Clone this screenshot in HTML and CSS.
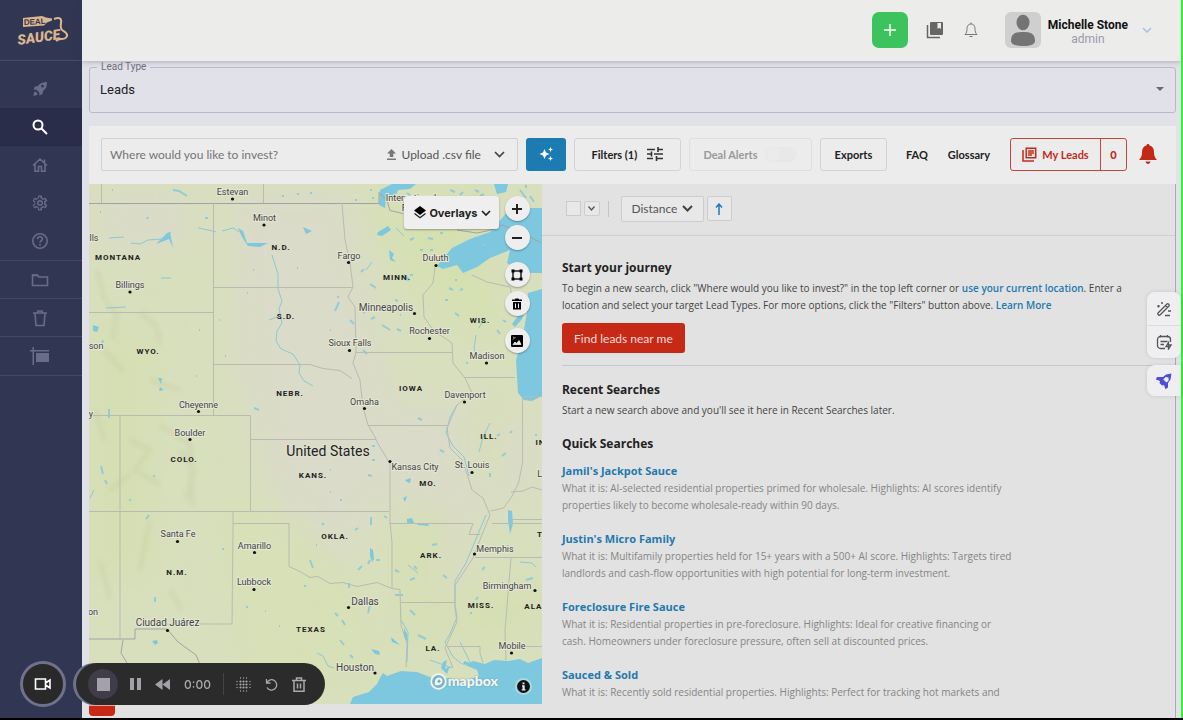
FILE: index.html
```html
<!DOCTYPE html>
<html lang="en">
<head>
  <meta charset="UTF-8">
  <meta name="viewport" content="width=device-width, initial-scale=1.0">
  <title>Deal Sauce - Leads</title>
  <link rel="stylesheet" href="styles.css">
</head>
<body>
  <div class="app">
    <nav class="sidebar">
      <a class="logo" href="#" aria-label="Deal Sauce">
        <svg width="54" height="34" viewBox="0 0 54 34">
          <path d="M7 5l19-2 4 1.500 6 1v2l-5 2-3 3L7 14z" fill="#dcb68f"/>
          <path d="M38 6c5-2 8-1 7 4-1 5 0 7 4 9 4 3 2 7-4 7-2 0-4 1-5 2" fill="none" stroke="#dcb68f" stroke-width="2"/>
          <text class="logo-deal" x="8" y="12" transform="rotate(-3 8 12)">DEAL</text>
          <text class="logo-sauce" x="2" y="32" transform="rotate(-8 2 32)">SAUCE</text>
        </svg>
      </a>
      <a class="nav-item" href="#" aria-label="Launch">
        <svg width="16" height="16" viewBox="0 0 16 16" fill="currentColor"><path d="M15 1c-4 0-7 1-9 4L3 5.500 1.500 8.500l3 .3 2.700 2.700.3 3 3-1.500.5-3C14 8 15 5 15 1zm-4.500 5.600a1.400 1.400 0 1 1 0-2.800 1.400 1.400 0 0 1 0 2.800zM3.500 10.500c-1.500.5-2 2-2 4.200 2.200 0 3.700-.5 4.200-2z"/></svg>
      </a>
      <a class="nav-item active" href="#" aria-label="Search">
        <svg width="16" height="16" viewBox="0 0 16 16" fill="none" stroke="currentColor" stroke-width="2"><circle cx="6" cy="6" r="4.500"/><path d="M9.500 9.500l5.500 5.500"/></svg>
      </a>
      <a class="nav-item" href="#" aria-label="Home">
        <svg width="16" height="16" viewBox="0 0 16 16" fill="none" stroke="currentColor" stroke-width="1.600"><path d="M1 8.500L8 2l7 6.500M3 7v7.200h3.500V9.500h3v4.700H13V7M12.500 5.500V2.500"/></svg>
      </a>
      <a class="nav-item" href="#" aria-label="Settings">
        <svg width="18" height="18" viewBox="0 0 24 24" fill="currentColor"><path d="M19.430 12.980c.04-.32.07-.64.07-.98 0-.34-.03-.66-.07-.98l2.110-1.650c.19-.15.24-.42.12-.64l-2-3.460c-.12-.22-.39-.3-.61-.22l-2.490 1c-.52-.4-1.080-.73-1.690-.98l-.38-2.650C14.460 2.180 14.250 2 14 2h-4c-.25 0-.46.18-.49.42l-.38 2.650c-.61.25-1.170.59-1.690.98l-2.490-1c-.23-.09-.49 0-.61.22l-2 3.460c-.13.22-.07.49.12.64l2.110 1.650c-.04.32-.07.65-.07.98s.03.66.07.98l-2.110 1.650c-.19.15-.24.42-.12.64l2 3.460c.12.22.39.3.61.22l2.490-1c.52.4 1.080.73 1.690.98l.38 2.650c.03.24.24.42.49.42h4c.25 0 .46-.18.49-.42l.38-2.650c.61-.25 1.170-.59 1.690-.98l2.490 1c.23.09.49 0 .61-.22l2-3.460c.12-.22.07-.49-.12-.64zm-2-1.700c.1.800.1 1 0 1.500l-.2 1.100 2 1.600-.9 1.500-2.300-1-.9.700c-.5.400-.9.600-1.300.8l-1.100.4-.3 2.400h-1.800l-.3-2.400-1.100-.4c-.5-.2-.9-.4-1.300-.8l-.9-.7-2.300 1-.9-1.500 2-1.600-.2-1.100c-.1-.6-.1-1 0-1.600l.2-1.100-2-1.600.9-1.500 2.300 1 .9-.7c.5-.4.9-.6 1.300-.8l1.100-.4.3-2.400h1.800l.3 2.400 1.100.4c.5.200.9.4 1.300.8l.9.7 2.300-1 .9 1.500-2 1.600z"/><circle cx="12" cy="12" r="3" fill="none" stroke="currentColor" stroke-width="2"/></svg>
      </a>
      <a class="nav-item" href="#" aria-label="Help">
        <svg width="18" height="18" viewBox="0 0 18 18" fill="none" stroke="currentColor" stroke-width="1.600"><circle cx="9" cy="9" r="7.200"/><path d="M6.500 7.200C6.500 3.900 11.500 4 11.500 7c0 1.700-2.500 1.800-2.500 3.700M9 12v1.700"/></svg>
      </a>
      <a class="nav-item lined" href="#" aria-label="Folders">
        <svg width="18" height="16" viewBox="0 0 18 16" fill="none" stroke="currentColor" stroke-width="1.600"><path d="M1.500 3h5l1.500 2h8.500v8.500h-15z"/><path d="M1 3.500h6"/></svg>
      </a>
      <a class="nav-item lined" href="#" aria-label="Trash">
        <svg width="16" height="18" viewBox="0 0 16 18" fill="none" stroke="currentColor" stroke-width="1.600"><path d="M1 4h14M5.500 4l.5-2h4l.5 2M3 4l1 12.500h8L13 4"/></svg>
      </a>
      <a class="nav-item lined" href="#" aria-label="Signs">
        <svg width="20" height="18" viewBox="0 0 20 18" fill="currentColor"><path d="M0 3h19v1.500H4V18H2.500V4.500H0zM2.500 0H4v3H2.500zM6 6h13v9H6z"/></svg>
      </a>
    </nav>

    <div class="page">
      <header class="topbar">
        <button class="add" aria-label="Add">
          <svg width="14" height="14" viewBox="0 0 14 14" stroke="#fff" stroke-width="1.500"><path d="M7 1v12M1 7h12"/></svg>
        </button>
        <a class="top-icon" href="#" aria-label="Library">
          <svg width="18" height="18" viewBox="0 0 18 18"><path d="M1.500 4v12.500H14" fill="none" stroke="#666" stroke-width="1.500"/><path d="M5 1h11a1 1 0 0 1 1 1v11a1 1 0 0 1-1 1H5a1 1 0 0 1-1-1V2a1 1 0 0 1 1-1z" fill="#666"/><path d="M11.500 2H15v6l-1.800-1.300L11.500 8z" fill="#ececeb"/></svg>
        </a>
        <a class="top-icon" href="#" aria-label="Notifications">
          <svg width="14" height="16" viewBox="0 0 14 16" fill="none" stroke="#777"><path d="M1 12.500c1.500-1.500 2-3 2-6C3 3.500 4.700 2 7 2s4 1.500 4 4.500c0 3 .5 4.500 2 6zM5.500 14.500h3M7 .5V2"/></svg>
        </a>
        <svg class="avatar" width="36" height="36" viewBox="0 0 36 36"><rect width="36" height="36" rx="6" fill="#cfcfd0"/><ellipse cx="18" cy="10.500" rx="6.500" ry="7.800" fill="#747474"/><path d="M6 29c0-8 5-9 12-9s12 1 12 9c0 3-4 5-12 5S6 32 6 29z" fill="#747474"/></svg>
        <div class="user">
          <strong>Michelle Stone</strong>
          <span>admin</span>
        </div>
        <svg width="10" height="6" viewBox="0 0 10 6" fill="none" stroke="#a9bfe4" stroke-width="1.500"><path d="M1 1l4 4 4-4"/></svg>
      </header>

      <main>
        <fieldset class="lead-type">
          <legend><label for="leadType">Lead Type</label></legend>
          <select id="leadType"><option>Leads</option></select>
          <svg width="8" height="4" viewBox="0 0 8 4"><path d="M0 0h8L4 4z" fill="#6a6a72"/></svg>
        </fieldset>

        <div class="toolbar">
          <div class="search">
            <input type="text" aria-label="Location" placeholder="Where would you like to invest?">
            <button class="upload">
              <svg width="9" height="11" viewBox="0 0 9 11" fill="#777"><path d="M4.500 0L9 4.500H6.300V8H2.700V4.500H0zM0 9.500h9V11H0z"/></svg>
              Upload .csv file
            </button>
            <svg width="11" height="7" viewBox="0 0 11 7" fill="none" stroke="#444" stroke-width="1.700"><path d="M1 1l4.500 4.500L10 1"/></svg>
          </div>
          <button class="ai" aria-label="AI search">
            <svg width="14" height="14" viewBox="0 0 14 14" fill="#fff"><path d="M5.500 2L7 5.500 10.500 7 7 8.500 5.500 12 4 8.500.5 7 4 5.500zM11.500 0l.7 1.800 1.800.7-1.800.7-.7 1.800-.7-1.800L9 2.500l1.800-.7zM11.500 9l.7 1.800 1.800.7-1.800.7-.7 1.800-.7-1.800-1.800-.7 1.800-.7z"/></svg>
          </button>
          <button class="tool filters">Filters (1)
            <svg width="16" height="14" viewBox="0 0 16 14" fill="none" stroke="#333" stroke-width="1.600"><path d="M0 2.500h8M11 2.500h5M11 0v5M0 7h4M7 7h9M4.500 4.500v5M0 11.500h6M9.500 11.500H16M9.500 9v5"/></svg>
          </button>
          <button class="tool alerts" disabled>Deal Alerts <i></i></button>
          <button class="tool exports">Exports</button>
          <a class="tool-link" href="#">FAQ</a>
          <a class="tool-link" href="#">Glossary</a>
          <button class="my-leads">
            <span>
              <svg width="15" height="15" viewBox="0 0 15 15"><path d="M1 3v11h11" fill="none" stroke="#c22a18" stroke-width="1.500"/><path d="M4.200 1.200h9.500v9.500H4.200zM6 4h6M6 6h6M6 8h4" fill="none" stroke="#c22a18" stroke-width="1.500"/></svg>
              My Leads
            </span>
            <b>0</b>
          </button>
          <a class="alarm" href="#" aria-label="Alerts">
            <svg width="18" height="20" viewBox="0 0 18 20" fill="#c22a18"><path d="M9 0c1 0 1.500.6 1.500 1.500C13.500 2.300 15 4.500 15 8c0 4 .8 5.500 3 8H0c2.200-2.500 3-4 3-8 0-3.500 1.500-5.700 4.500-6.500C7.500.6 8 0 9 0zM6.500 17.500h5C11 19.200 10.200 20 9 20s-2-.8-2.500-2.500z"/></svg>
          </a>
        </div>

        <div class="content">
          <section class="map-pane">
            <div class="map">
              <svg class="map-art" viewBox="89 184 453 520" preserveAspectRatio="xMinYMin slice">
                <defs>
                  <filter id="soft" x="-30%" y="-30%" width="160%" height="160%"><feGaussianBlur stdDeviation="16"/></filter>
                  <filter id="hill" x="-30%" y="-30%" width="160%" height="160%"><feGaussianBlur stdDeviation="2"/></filter>
                </defs>
                <rect x="89" y="184" width="453" height="520" fill="#d8dfbd"/>
                <g filter="url(#soft)">
                  <path d="M230 190h120l20 110 30 110 80-20 60 40v60l-70 20-90-10-30 60-60-20-50-150z" fill="#dadbc8"/>
                  <path d="M100 190h90v60h-90z" fill="#dadbc8"/>
                  <path d="M370 190h110l10 80 20 70-60-20-50-60z" fill="#d5e0b1"/>
                  <path d="M400 520h60l-10 80 90-20v60h-140zM90 330h60v250H90z" fill="#d5dfb2"/>
                  <path d="M220 500l80 20 60 80 20 80-130 10zM470 400h30v80h-30z" fill="#d7e0b6"/>
                  <path d="M455 480l15 60-25 50v60l-10-60z" fill="#dbdac8"/>
                </g>
                <g class="hills" filter="url(#hill)">
                  <path d="M97 270l8 30 12 15-4 25M140 312l16 14 4 18M104 350l20 22M130 440l20 10-15 20 25 15M110 490l20-15M180 450l14 20-8 30M160 425l30 20 3 60M150 520l-10 50M100 560l10 40M170 590l12 20M95 410l10 30M150 380l30 10"/>
                </g>
                <g class="water">
                  <path d="M437 266l15-18 18-9 20-7 13-15 7-9h32v65h-19l-16-10 3-13-20 8-13 9-14 6-6-8-14 4z"/>
                  <path d="M528 293l14-4v107l-10 5-8-1-6-7-2-33 6-20 5-27zM512 324l6-8 8-9-4 12-7 8z"/>
                  <path d="M383 673l4 3 14-5 16 1 18 7 14-1 14 4 16-6-2-6-12-5 8-4 12 3 9-4 14 1 12-2 8 4 14-5v46H350l3-7 16-5 8-8 4-8z"/>
                  <path d="M380 190l12-6h24l-6 5-12 1-4 10-8-2-1 10-6-3zM378 232l10-6 3 4-9 6-5-1zM389 250l5 4-2 4 4 4-6-2zM494 184h14l-2 8-9 2zM158 242l9-9 3-1 3 16-4-9-13 5zM238 228l5 3 4 12 12 0 9 0-8 4-12-1-6-9zM303 227l9 4-6 3zM93 325l6 2-2 5-4-1zM158 378l4 0-1 6zM160 387l4 3-5 1z"/>
                  <path d="M405 480l6-2-1 5-3-1zM403 498l4-2-2 6zM370 548l3 2 1 9-2 3-2-6zM407 519l5-1 2 5-7 1zM416 523l12 1 1 2-11-1zM152 641l5-1 1 3-3 2zM371 649l8 2 1 4-5-1zM391 637l9 8-8-3zM508 510l4 1 1 13-3 10-2-14zM404 628l3 6 1 9-4-7zM443 662l4-2-2 9 5-3-3 8-6-6zM464 661l7 2-8 2z"/>
                </g>
                <g class="river">
                  <path d="M131 243l9 1 8-4 14-1 9-7M198 228l15 3 3 1M222 231l11-3 6 4M272 255l6 19 0 15 4 12-3 8 3 14-5 8-1 10 5 8 12 5 7 11-1 8 5 8 9 5M269 320l8-3M90 498l4-8M396 228l8 8M372 262l-6 8M457 405l-7 12-4 16 7 13 11 11 5 19M476 335l-2 14 4 10M484 318l-5 10M490 423l-7 14-4 15M486 515l-8 19-12 29-11 18 0 24 2 12-7 17-5 8 8 15 9 7M401 620l7 12-1 30M408 565l10 8M520 562l12 1 4 4M460 642l10 20M106 308l20-1M109 238l15-1M161 278l10 0M430 660l22 8M317 653l6 3 5 10 6 2"/>
                </g>
                <g class="lakes">
                  <path d="M112 190h1M173 190l6 1 8 5M282 196h2M297 194h2M310 193h2M100 212h1M147 219l1-2M205 218h3M253 270h1M297 268h1M199 330h1M247 293h1M219 320h1M225 356h1M196 376h1M109 418v-9M254 408l5 2M153 476h2M101 466l2 8M105 480l2 4M129 500h2M149 515l-3 4M103 340l-2 6M155 597v5M222 549h2M246 607h2M265 611h1M279 626h1M304 586h2M316 545h1M322 525l2-2M371 525v-8M384 516l3 2M355 530l3-2M310 560l3 8M358 570l4-4M335 613l3 3M395 595l8 0M395 570l4 2M410 580l5-2M443 575l4 3M410 610l5 5M418 635l8 4M476 600l2-3M470 613h2M340 640l4 5M350 655l3 3M370 605l-2 8M330 470h1M330 492h1M345 450h2M368 475l4 1M372 460h3M372 446h3M440 450l4 2M490 473v4M506 453l-4 3M497 436l3-2M510 433l2-2M340 500h2M535 435h2M363 350l4 4M350 320l4 4M339 302l-4 9M330 330h1M337 297h2M362 311l3 2M371 319l4-2M385 305h2M382 325l8 5M397 329l4 2M364 269l-3 3M370 284l6 4M410 275h3M405 279l4 1M420 250h3M395 300l3 1M449 288l4 2M445 300h3M455 280h2M460 290l3-1M455 313l4 3M497 330l3 4M503 320l3 2M483 245h2M428 238l5 1M410 240l4-2M430 250h3M440 233h3M407 193l4 3M420 200l4 1M450 190l5 2M460 195l3-3M475 190l4 2M480 196l4-2M520 190l6 8M530 196l4 6M515 200h4M526 185v3M370 190h2M355 200h2M372 198h2M404 275l5 4M466 363h2M400 315h1M418 418l4 2M432 545l5-1M414 566l3 3M482 570l3-3M526 580l7-2M342 620l3 5M376 560l4 0M349 583v5M370 560l-2 4"/>
                </g>
                <g class="borders">
                  <path d="M89 203.500h290v-11l8 8 3 10 13 3M457 230l20 3 10-2 15-6 21 8 18 10M89 639h46v-10h32l11 13 18 13 6 14M123 640l-2 13 6 10 2 8" stroke="#a3a3a6"/>
                  <path d="M101.500 184v19M263.500 184v19M213.500 203v212M213 287.500h140M89 312.500h124M213 364.500h97l13 4 17 2 12 8M89 415.500h161.500v96M250 439.500h126M120 415v224M89 511.500h300M233 511v20l-1 93h-65M233 523.500h56v43l11 5 10 6 8-1 12 7 13-1 14 4 20-4 15 6 8 1 1 36 6 18-1 24M390 462v61l2 19v46M390 523.500h83l-4 11h11M401 602.500h54"/>
                  <path d="M342 203l3 37 5 23 3 24-5 10 7 10 1 45-3 11 7 17 3 27 5 18 7 12 2 5 12 20M356 352.500h96M368 425.500h79M435 267l-2 16-10 12 1 22 9 13 19 13 1 20 12 15 7 15-15 12-10 23 3 20 12 12 6 17 4 13 11 8 7 17-7 17-10 26-18 27v23l2 14-12 26 8 20"/>
                  <path d="M465 377.500h50M522.500 398v65l-4 20-7 14-8 11-13 3M523 396.500h19M492 523.500h50M512 519.500h30M511 492l12-1 9-4 10 3M475 557.500h67M511 558l-6 72 1 30M447 646.500h33v7l3 9M507 646.500h35M472 275l15 7 23 5 2 8"/>
                </g>
                <g class="dots">
                  <circle cx="232.500" cy="199" r="1.600"/><circle cx="264" cy="225" r="1.600"/><circle cx="348.500" cy="262.500" r="1.600"/><circle cx="436" cy="265.500" r="1.600"/><circle cx="130" cy="292" r="1.600"/><circle cx="414.500" cy="313.500" r="1.600"/><circle cx="429.500" cy="338.500" r="1.600"/><circle cx="349.500" cy="350.500" r="1.600"/><circle cx="486.500" cy="363" r="1.600"/><circle cx="464.500" cy="402" r="1.600"/><circle cx="364.500" cy="408.500" r="1.600"/><circle cx="198.500" cy="411.500" r="1.600"/><circle cx="190" cy="439.500" r="1.600"/><circle cx="390" cy="461.500" r="1.600"/><circle cx="472" cy="472.500" r="1.600"/><circle cx="177.500" cy="541.500" r="1.600"/><circle cx="254.500" cy="552.500" r="1.600"/><circle cx="474.500" cy="554" r="1.600"/><circle cx="254" cy="589.500" r="1.600"/><circle cx="535" cy="590.500" r="1.600"/><circle cx="348.500" cy="607.500" r="1.600"/><circle cx="167.500" cy="630.500" r="1.600"/><circle cx="511.500" cy="653" r="1.600"/><circle cx="375" cy="673" r="1.600"/>
                </g>
                <g class="cities">
                  <text x="232.500" y="195">Estevan</text>
                  <text x="264.500" y="221">Minot</text>
                  <text x="349" y="259">Fargo</text>
                  <text x="435.500" y="261">Duluth</text>
                  <text x="130" y="288">Billings</text>
                  <text x="386" y="311" class="big">Minneapolis</text>
                  <text x="429.500" y="334">Rochester</text>
                  <text x="350" y="346">Sioux Falls</text>
                  <text x="487" y="359">Madison</text>
                  <text x="465" y="398">Davenport</text>
                  <text x="364.500" y="405">Omaha</text>
                  <text x="198.500" y="408">Cheyenne</text>
                  <text x="190" y="436">Boulder</text>
                  <text x="415" y="470">Kansas City</text>
                  <text x="472" y="468">St. Louis</text>
                  <text x="178" y="537">Santa Fe</text>
                  <text x="254.500" y="549">Amarillo</text>
                  <text x="495" y="552">Memphis</text>
                  <text x="254" y="585">Lubbock</text>
                  <text x="507" y="589">Birmingham</text>
                  <text x="365" y="605" class="big">Dallas</text>
                  <text x="167.500" y="626" class="big">Ciudad Juárez</text>
                  <text x="512" y="649">Mobile</text>
                  <text x="355" y="671" class="big">Houston</text>
                  <text x="411" y="201">International</text>
                  <text x="411" y="211">Falls</text>
                  <text x="94" y="241">lls</text>
                  <text x="96" y="349">son</text>
                  <text x="91" y="417">y</text>
                  <text x="93" y="615">on</text>
                  <text x="556" y="477">Louisville</text>
                </g>
                <g class="states">
                  <text x="118" y="260">MONTANA</text>
                  <text x="281" y="250">N.D.</text>
                  <text x="286" y="319">S.D.</text>
                  <text x="148" y="354">WYO.</text>
                  <text x="397" y="280">MINN.</text>
                  <text x="480" y="323">WIS.</text>
                  <text x="290" y="396">NEBR.</text>
                  <text x="411" y="391">IOWA</text>
                  <text x="489" y="439">ILL.</text>
                  <text x="545" y="445">IND.</text>
                  <text x="184" y="462">COLO.</text>
                  <text x="313" y="478">KANS.</text>
                  <text x="428" y="486">MO.</text>
                  <text x="335" y="539">OKLA.</text>
                  <text x="431" y="558">ARK.</text>
                  <text x="551" y="537">TENN.</text>
                  <text x="177" y="575">N.M.</text>
                  <text x="481" y="608">MISS.</text>
                  <text x="535" y="609">ALA.</text>
                  <text x="311" y="632">TEXAS</text>
                  <text x="433" y="651">LA.</text>
                </g>
                <text class="country" x="328" y="456">United States</text>
              </svg>

              <div class="map-controls">
                <button class="overlays">
                  <svg width="12" height="13" viewBox="0 0 12 13"><path d="M6 0l6 4.500L6 9 0 4.500z"/><path d="M0.500 7.500L6 11.700l5.500-4.200" fill="none" stroke="#222" stroke-width="1.400"/></svg>
                  Overlays
                  <svg width="10" height="6" viewBox="0 0 10 6" fill="none" stroke="#222" stroke-width="1.700"><path d="M1 1l4 4 4-4"/></svg>
                </button>
                <div class="rounds">
                  <button class="round" aria-label="Zoom in"><svg width="10" height="10" viewBox="0 0 10 10" stroke="#222" stroke-width="2"><path d="M5 0v10M0 5h10"/></svg></button>
                  <button class="round" aria-label="Zoom out"><svg width="10" height="10" viewBox="0 0 10 10" stroke="#222" stroke-width="2"><path d="M0 5h10"/></svg></button>
                  <button class="round apart" aria-label="Draw area"><svg width="12" height="12" viewBox="0 0 12 12"><path d="M2 2h8v8H2z" fill="none" stroke="#222" stroke-width="1.500"/><path d="M.5.500h3v3h-3zM8.500.500h3v3h-3zM.5 8.500h3v3h-3zM8.500 8.500h3v3h-3z"/></svg></button>
                  <button class="round" aria-label="Clear area"><svg width="12" height="12" viewBox="0 0 12 12"><path d="M1 1.500h3L4.500.5h3l.5 1h3V3H1zM2 4h8v7.500H2z"/><path d="M4.500 5.500v4.500M7.500 5.500v4.500" stroke="#eee"/></svg></button>
                  <button class="round apart" aria-label="Satellite view"><svg width="12" height="12" viewBox="0 0 12 12"><rect width="12" height="12" rx="1"/><path d="M2 9.500l2-2.500 1.500 1.500L8 5.500l2 4zM2 4.500L4.500 2M2 2.200h1" fill="#eee" stroke="#eee" stroke-width=".8"/></svg></button>
                </div>
              </div>
              <div class="attribution">
                <svg width="17" height="17" viewBox="0 0 17 17"><circle cx="8.500" cy="8.500" r="7.300" fill="#7fb3c9" stroke="#f4f6f2" stroke-width="1.800"/><path d="M5 12c-1-4 1-7.500 4-7.500 2 0 3.500 1.500 3.500 3.500 0 3-3.500 5-7.500 4z" fill="#f4f6f2"/><path d="M9 6l.7 1.600 1.600.6-1.600.7L9 10.500l-.7-1.600-1.600-.7 1.600-.6z" fill="#6b9eb5"/></svg>
                <span>mapbox</span>
                <button aria-label="Map info"><svg width="13" height="13" viewBox="0 0 13 13"><circle cx="6.500" cy="6.500" r="6.500" fill="#111"/><path d="M5.500 2.500h2v1.700h-2zM5 5.300h2.700v3.900H8.500v1.300H4.700V9.200h.8V6.600H5z" fill="#dfeef2"/></svg></button>
              </div>
            </div>
            <button class="chat-tab" aria-label="Chat"></button>
          </section>

          <section class="results">
            <div class="sortbar">
              <input type="checkbox" aria-label="Select all">
              <button class="pick" aria-label="Selection options"><svg width="7" height="5" viewBox="0 0 7 5" fill="none" stroke="#555" stroke-width="1.300"><path d="M.5.500l3 3.500 3-3.500"/></svg></button>
              <hr>
              <button class="sort">Distance <svg width="11" height="7" viewBox="0 0 11 7" fill="none" stroke="#444" stroke-width="2"><path d="M1 1l4.500 4.500L10 1"/></svg></button>
              <button class="direction" aria-label="Ascending"><svg width="8" height="12" viewBox="0 0 8 12" fill="none" stroke="#1c7bb5" stroke-width="1.500"><path d="M4 12V1M1 4.500l3-3.500 3 3.500"/></svg></button>
            </div>
            <div class="feed">
              <h2>Start your journey</h2>
              <p>To begin a new search, click "Where would you like to invest?" in the top left corner or <a href="#">use your current location</a>. Enter a location and select your target Lead Types. For more options, click the "Filters" button above. <a href="#">Learn More</a></p>
              <button class="find">Find leads near me</button>
              <hr>
              <h2>Recent Searches</h2>
              <p>Start a new search above and you'll see it here in Recent Searches later.</p>
              <h2 class="quick">Quick Searches</h2>
              <div class="quick-item">
                <a href="#">Jamil's Jackpot Sauce</a>
                <p>What it is: AI-selected residential properties primed for wholesale. Highlights: AI scores identify properties likely to become wholesale-ready within 90 days.</p>
              </div>
              <div class="quick-item">
                <a href="#">Justin's Micro Family</a>
                <p>What it is: Multifamily properties held for 15+ years with a 500+ AI score. Highlights: Targets tired landlords and cash-flow opportunities with high potential for long-term investment.</p>
              </div>
              <div class="quick-item">
                <a href="#">Foreclosure Fire Sauce</a>
                <p>What it is: Residential properties in pre-foreclosure. Highlights: Ideal for creative financing or cash. Homeowners under foreclosure pressure, often sell at discounted prices.</p>
              </div>
              <div class="quick-item">
                <a href="#">Sauced &amp; Sold</a>
                <p>What it is: Recently sold residential properties. Highlights: Perfect for tracking hot markets and</p>
              </div>
            </div>
          </section>
        </div>
      </main>
    </div>
  </div>

  <!-- extension buttons on the right edge -->
  <aside class="side-tools">
    <div class="side-group">
      <button aria-label="Magic edit"><svg width="16" height="16" viewBox="0 0 16 16" fill="none" stroke="#555" stroke-width="1.300"><path d="M2 12L11 3c1-1 3 1 2 2l-9 9c-1 1-3-1-2-2zM9.500 4.500l2 2M9 14.500h5M2.500 6.500V4M1.200 5.200h2.600M5 2h2M12 10h3"/></svg></button>
      <button aria-label="Notes"><svg width="16" height="16" viewBox="0 0 16 16" fill="none" stroke="#555" stroke-width="1.300"><path d="M9 14.500H4.500a3 3 0 0 1-3-3v-6a3 3 0 0 1 3-3h7a3 3 0 0 1 3 3V8M4.500 1v2.500M11.500 1v2.500M4.500 7.500h7M4.500 10.500h3.500M12.500 8.500l-2.500 4h2.500v2.500l2.500-4h-2.500z"/></svg></button>
    </div>
    <button class="side-rocket" aria-label="Assistant"><svg width="18" height="18" viewBox="0 0 18 18"><path d="M16.500 1.500L11 2.500 8 5H2L.8 7.500 5 9l-.5 2L7 13.500l2-.5 1.500 4.200L13 15.500V11l2.500-3.500z" fill="#4f4fd6"/><path d="M10.500 5l3 .5.2 3-2.200 2-3.200-3z" fill="#efeff2"/></svg></button>
  </aside>

  <!-- screen recorder -->
  <div class="recorder">
    <button class="camera" aria-label="Camera"><svg width="18" height="14" viewBox="0 0 18 14" fill="none" stroke="#fff" stroke-width="1.600"><path d="M1.500 2h10v10h-10zM11.500 6L16 3v8l-4.500-3"/></svg></button>
    <div class="pill">
      <button class="stop" aria-label="Stop"><i></i></button>
      <button aria-label="Pause"><svg width="11" height="12" viewBox="0 0 11 12"><path d="M0 0h4v12H0zM7 0h4v12H7z"/></svg></button>
      <button aria-label="Rewind"><svg width="15" height="11" viewBox="0 0 15 11"><path d="M7.500 0v11L0 5.500zM15 0v11L7.500 5.500z"/></svg></button>
      <time>0:00</time>
      <hr>
      <button aria-label="Blur"><svg width="15" height="15" viewBox="0 0 15 15" fill="none" stroke="#aaa" stroke-linecap="round"><path stroke-width="2.200" stroke-dasharray="0 3" d="M4.500 4.500h6.500M4.500 7.500h6.500M4.500 10.500h6.500"/><path stroke-width="1.300" stroke-dasharray="0 3" d="M4.500 1h7M4.500 14h7M1 4.500v7M14 4.500v7"/></svg></button>
      <button aria-label="Restart"><svg width="13" height="13" viewBox="0 0 13 13" fill="none" stroke="#aaa" stroke-width="1.300"><path d="M1.500 1v4h4M1.800 4.700A5.200 5.200 0 1 1 2 9.500"/></svg></button>
      <button aria-label="Delete"><svg width="14" height="15" viewBox="0 0 14 15" fill="none" stroke="#aaa" stroke-width="1.500"><path d="M0 3.500h14M4.500 3V1h5v2M2 3.500v10.700h10V3.500M5.500 6.500v5M8.500 6.500v5"/></svg></button>
    </div>
  </div>
</body>
</html>
```

FILE: styles.css
```css
* {
  box-sizing: border-box;
}

body {
  margin: 0;
  background: #000;
  color: #222;
  font-family: Lato, "Liberation Sans", sans-serif;
  font-size: 11px;
}

button, input, select {
  font: inherit;
  color: inherit;
}

button {
  padding: 0;
  border: 0;
  background: none;
  cursor: pointer;
}

a {
  color: #1f79ae;
  text-decoration: none;
}

svg {
  flex: none;
  display: block;
}

.app {
  display: flex;
  height: calc(100vh - 2px);
  border-right: 2px solid #2df52d;
  background: #e1e1ea;
  overflow: hidden;
}

/* sidebar */
.sidebar {
  flex: none;
  width: 82px;
  background: #313653;
  color: #696c86;
}

.logo {
  display: flex;
  align-items: center;
  justify-content: center;
  height: 61px;
  margin-bottom: 9px;
  padding-left: 4px;
  border-bottom: 1px solid #474b68;
}

.logo-deal {
  font: 700 8px "Liberation Sans", sans-serif;
  fill: #313653;
}

.logo-sauce {
  font: italic 900 14px Roboto, sans-serif;
  fill: #dcb68f;
}

.nav-item {
  display: flex;
  align-items: center;
  justify-content: center;
  height: 38px;
  padding-right: 3px;
  color: inherit;
}

.nav-item.active {
  background: #292d49;
  color: #fff;
}

.nav-item.lined {
  border-top: 1px solid #444863;
}

.nav-item.lined:last-child {
  height: 40px;
  border-bottom: 1px solid #444863;
}

/* top bar */
.page {
  flex: 1;
  min-width: 0;
  display: flex;
  flex-direction: column;
}

.topbar {
  display: flex;
  align-items: center;
  justify-content: flex-end;
  flex: none;
  height: 61px;
  padding: 0 29px 2px 0;
  background: #ececeb;
  box-shadow: 0 1px 5px rgba(60, 60, 90, 0.3);
  font-family: Roboto, sans-serif;
}

.add {
  display: flex;
  align-items: center;
  justify-content: center;
  width: 36px;
  height: 36px;
  margin-right: 18px;
  border-radius: 7px;
  background: #3cc35e;
}

.top-icon {
  margin-right: 20px;
}

.avatar {
  margin: 0 7px;
}

.user {
  margin-right: 14px;
  padding-top: 4px;
  text-align: center;
  font-size: 12px;
  line-height: 14px;
  color: #111;
}

.user strong, .user span {
  display: block;
}

.user span {
  color: #9a9aa8;
}

main {
  flex: 1;
  min-height: 0;
  display: flex;
  flex-direction: column;
  padding: 0 5px 0 7px;
}

.lead-type {
  display: flex;
  align-items: center;
  flex: none;
  min-width: 0;
  height: 52px;
  margin: 0 0 13px;
  padding: 0 11px 7px 7px;
  border: 1px solid #babac6;
  border-radius: 3px;
  font-family: Roboto, sans-serif;
}

.lead-type legend {
  padding: 0 4px;
  font-size: 10px;
  line-height: 12px;
  color: #6f6f7a;
}

.lead-type select {
  flex: 1;
  height: 32px;
  padding: 0 3px;
  border: 0;
  background: none;
  appearance: none;
  font-size: 13px;
}

/* toolbar */
.toolbar {
  display: flex;
  align-items: center;
  flex: none;
  gap: 8px;
  height: 58px;
  padding: 0 19px 2px 12px;
  background: #ececec;
  font-weight: 700;
}

.search {
  flex: 1;
  display: flex;
  align-items: center;
  min-width: 0;
  height: 33px;
  padding: 0 12px 0 8px;
  border: 1px solid #cfd1d3;
  border-radius: 2px;
  font-size: 12px;
  font-weight: 400;
}

.search input {
  flex: 1;
  min-width: 0;
  padding: 0;
  border: 0;
  outline: 0;
  background: none;
}

.search input::placeholder {
  color: #757575;
}

.upload {
  display: flex;
  align-items: center;
  gap: 5px;
  margin-right: 13px;
  color: #555;
}

.ai, .tool, .my-leads {
  display: flex;
  align-items: center;
  justify-content: center;
  height: 33px;
  border-radius: 3px;
}

.ai {
  width: 40px;
  background: #1c7cb2;
}

.tool {
  border: 1px solid #d2d3d5;
}

.filters {
  gap: 10px;
  width: 107px;
}

.alerts {
  gap: 8px;
  width: 123px;
  border-color: #dedfe0;
  color: #999;
}

.alerts i {
  width: 32px;
  height: 15px;
  border-radius: 8px;
  background: radial-gradient(circle at 8px, #ebebeb 6px, #e8e8e8 7px);
}

.exports {
  width: 67px;
}

.tool-link {
  margin-left: 12px;
  color: #222;
}

.tool-link:first-of-type {
  margin-left: 11px;
}

.my-leads {
  width: 117px;
  margin-left: 12px;
  border: 1px solid #c4473a;
  color: #c22a18;
}

.my-leads span {
  flex: 1;
  display: flex;
  align-items: center;
  justify-content: center;
  gap: 5px;
}

.my-leads b {
  width: 26px;
  border-left: 1px solid #c4473a;
  line-height: 31px;
}

.alarm {
  margin-left: 4px;
}

/* map */
.content {
  flex: 1;
  min-height: 0;
  display: grid;
  grid-template-columns: 5fr 7fr;
  background: #e2e2e2;
}

.map-pane {
  display: flex;
  flex-direction: column;
  min-width: 0;
  min-height: 0;
}

.map {
  position: relative;
  flex: 1;
  min-height: 0;
  overflow: hidden;
}

.map-art {
  width: 100%;
  height: 100%;
  font-family: Roboto, sans-serif;
}

.water {
  fill: #7dc8de;
}

.river {
  fill: none;
  stroke: #8ac9d6;
  stroke-width: 1;
}

.lakes {
  fill: none;
  stroke: #8fcdd8;
  stroke-width: 2;
}

.hills {
  fill: none;
  stroke: #c3caa0;
  stroke-width: 5;
  opacity: 0.35;
}

.borders {
  fill: none;
  stroke: #b9bbb2;
  stroke-width: 1;
}

.dots {
  fill: #111;
}

.cities {
  font-size: 9px;
  text-anchor: middle;
  fill: #444;
  stroke: #e4e7d4;
  stroke-width: 2;
  paint-order: stroke;
}

.cities .big {
  font-size: 10px;
}

.states {
  font-size: 8px;
  font-weight: 700;
  letter-spacing: 1px;
  text-anchor: middle;
  fill: #222;
}

.country {
  font-size: 14px;
  text-anchor: middle;
  fill: #222;
  stroke: #e0e0d0;
  stroke-width: 2;
  paint-order: stroke;
}

.map-controls {
  position: absolute;
  top: 12px;
  right: 12px;
  display: flex;
  gap: 6px;
}

.overlays {
  display: flex;
  align-items: center;
  justify-content: space-between;
  width: 95px;
  height: 33px;
  padding: 0 8px 0 10px;
  border-radius: 3px;
  background: #efefef;
  box-shadow: 0 1px 2px rgba(0, 0, 0, 0.3);
  font-family: Inter, sans-serif;
  font-weight: 700;
}

.rounds {
  display: flex;
  flex-direction: column;
  gap: 4px;
}

.round {
  display: flex;
  align-items: center;
  justify-content: center;
  width: 25px;
  height: 25px;
  border-radius: 50%;
  background: #eee;
  box-shadow: 0 1px 2px rgba(0, 0, 0, 0.3);
}

.round.apart {
  margin-top: 8px;
}

.attribution {
  position: absolute;
  right: 10px;
  bottom: 9px;
  display: flex;
  align-items: flex-end;
  height: 24px;
}

.attribution > svg {
  align-self: flex-start;
  margin-top: 2px;
}

.attribution span {
  align-self: flex-start;
  margin: 0 17px 0 1px;
  color: #f4f6f2;
  font-size: 14px;
  line-height: 20px;
  font-weight: 900;
  text-shadow: 0 0 2px #6e98a6;
}

.attribution button {
  padding: 2px;
  border-radius: 50%;
  background: #a9d9e6;
}

.chat-tab {
  flex: none;
  width: 26px;
  height: 12px;
  margin-bottom: 2px;
  border-top: 2px solid #e8a69e;
  border-radius: 0 0 4px 4px;
  background: #c62a17;
}

/* results */
.results {
  min-width: 0;
  overflow: hidden;
  border-right: 1px solid #a9a9bd;
}

.sortbar {
  display: flex;
  align-items: center;
  height: 52px;
  padding: 0 0 2px 24px;
  border-bottom: 1px solid #cfd0d2;
}

.sortbar input {
  appearance: none;
  width: 15px;
  height: 15px;
  margin: 0 3px 0 0;
  border: 1px solid #c9cbcd;
  background: #e8e8e8;
}

.pick, .sort, .direction {
  display: flex;
  align-items: center;
  justify-content: center;
  border: 1px solid #cccdd0;
  border-radius: 2px;
  background: #e8e8e8;
}

.pick {
  width: 16px;
  height: 15px;
}

.sortbar hr {
  width: 1px;
  height: 16px;
  margin: 0 12px 0 8px;
  border: 0;
  background: #c4c5c7;
}

.sort {
  gap: 5px;
  width: 83px;
  height: 26px;
  margin-right: 3px;
  font-size: 12px;
  color: #555;
}

.direction {
  width: 25px;
  height: 25px;
}

.feed {
  padding: 22px 0 0 20px;
  font-family: "Open Sans", sans-serif;
  font-size: 10px;
  line-height: 17px;
}

.feed h2 {
  margin: 0 0 2px;
  font-size: 12px;
  font-weight: 700;
  line-height: 20px;
}

.feed p {
  margin: 0;
  padding-right: 40px;
  color: #444;
}

.feed a {
  font-weight: 600;
}

.find {
  width: 123px;
  height: 30px;
  margin: 9px 0 12px;
  border-radius: 3px;
  background: #c62a17;
  color: #f3dcd8;
  font-family: Lato, sans-serif;
  font-size: 12px;
}

.feed hr {
  margin: 0 0 14px;
  border: 0;
  border-top: 1px solid #c3cacd;
}

.feed .quick {
  margin: 15px 0 7px;
}

.quick-item {
  max-width: 452px;
  margin-bottom: 15px;
}

.quick-item a {
  display: block;
  font-size: 11px;
  font-weight: 700;
  line-height: 19px;
}

.quick-item p {
  padding: 0;
  color: #858585;
}

/* right edge */
.side-tools {
  position: fixed;
  top: 292px;
  right: 2px;
  display: flex;
  flex-direction: column;
  gap: 7px;
}

.side-group, .side-rocket {
  width: 34px;
  border-radius: 8px 0 0 8px;
  background: #efeff2;
  box-shadow: 0 0 4px rgba(0, 0, 0, 0.12);
}

.side-group {
  height: 66px;
  border-radius: 8px;
}

.side-group button, .side-rocket {
  display: flex;
  align-items: center;
  justify-content: center;
}

.side-group button {
  width: 34px;
  height: 33px;
}

.side-group button + button {
  border-top: 1px solid #dcdce2;
}

.side-rocket {
  height: 31px;
}

/* recorder */
.recorder {
  position: fixed;
  left: 20px;
  bottom: 13px;
  display: flex;
  align-items: center;
  gap: 10px;
}

.camera {
  display: flex;
  align-items: center;
  justify-content: center;
  width: 46px;
  height: 46px;
  border: 3px solid #70728c;
  border-radius: 50%;
  background: #292929;
}

.pill {
  display: flex;
  align-items: center;
  gap: 14px;
  height: 42px;
  padding: 0 19px 0 12px;
  border-radius: 21px;
  background: #2b2b2b;
  box-shadow: -3px 0 0 #70728c;
  color: #aaa;
}

.pill svg {
  fill: #a3a0a8;
}

.pill svg[fill="none"] {
  fill: none;
}

.stop {
  display: flex;
  align-items: center;
  justify-content: center;
  width: 30px;
  height: 30px;
  margin-right: -2px;
  border-radius: 50%;
  background: #403c48;
}

.stop i {
  width: 13px;
  height: 13px;
  background: #a5a0ae;
}

.pill time {
  font: 500 12px Inter, sans-serif;
}

.pill hr {
  width: 1px;
  height: 22px;
  margin: 0 -2px;
  border: 0;
  background: #444;
}
```
